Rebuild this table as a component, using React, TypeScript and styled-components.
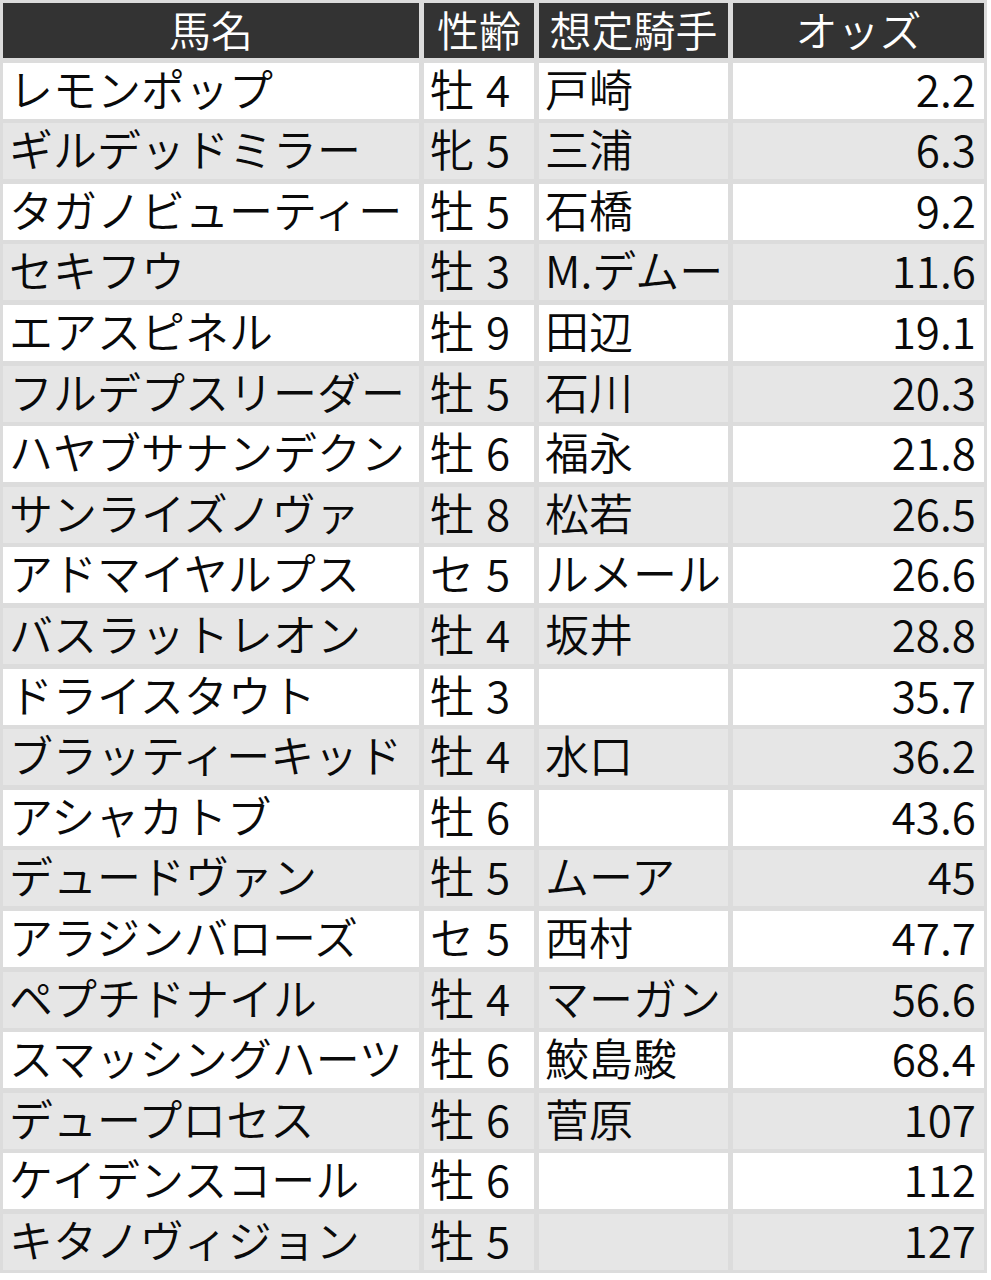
import React from "react";
import styled, { createGlobalStyle } from "styled-components";

const Global = createGlobalStyle`
  html, body { margin: 0; padding: 0; background: #ffffff; }
  body { font-family: "Noto Sans CJK JP", "Noto Sans", sans-serif; }
`;

const Grid = styled.div`
  display: grid;
  width: 987px;
  box-sizing: border-box;
  padding: 3px;
  background: #dcdcdc;
  grid-template-columns: 416px 110px 189px 251px;
  grid-template-rows: 55px;
  grid-auto-rows: 56px;
  column-gap: 5px;
  row-gap: 4.6px;
`;

const Row = styled.div`
  display: contents;
`;

const Head = styled.div`
  display: flex;
  align-items: center;
  justify-content: center;
  background: #333333;
  color: #ffffff;
  font-size: 42px;
  font-weight: 350;
  line-height: 1;
  padding-bottom: 4px;
  box-sizing: border-box;
  white-space: nowrap;
`;

const Cell = styled.div<{ $alt: boolean; $align?: "left" | "right" }>`
  display: flex;
  align-items: center;
  justify-content: ${(p) => (p.$align === "right" ? "flex-end" : "flex-start")};
  background: ${(p) => (p.$alt ? "#e6e6e6" : "#ffffff")};
  color: #0a0a0a;
  font-size: 44px;
  font-weight: 350;
  line-height: 1;
  box-sizing: border-box;
  padding: 0 ${(p) => (p.$align === "right" ? "8px" : "6px")} 6px;
  white-space: nowrap;
`;

const Sex = styled.span`
  margin-right: 12px;
`;

type Horse = [string, string, string, string, string];

const horses: Horse[] = [
  ["レモンポップ", "牡", "4", "戸崎", "2.2"],
  ["ギルデッドミラー", "牝", "5", "三浦", "6.3"],
  ["タガノビューティー", "牡", "5", "石橋", "9.2"],
  ["セキフウ", "牡", "3", "M.デムー", "11.6"],
  ["エアスピネル", "牡", "9", "田辺", "19.1"],
  ["フルデプスリーダー", "牡", "5", "石川", "20.3"],
  ["ハヤブサナンデクン", "牡", "6", "福永", "21.8"],
  ["サンライズノヴァ", "牡", "8", "松若", "26.5"],
  ["アドマイヤルプス", "セ", "5", "ルメール", "26.6"],
  ["バスラットレオン", "牡", "4", "坂井", "28.8"],
  ["ドライスタウト", "牡", "3", "", "35.7"],
  ["ブラッティーキッド", "牡", "4", "水口", "36.2"],
  ["アシャカトブ", "牡", "6", "", "43.6"],
  ["デュードヴァン", "牡", "5", "ムーア", "45"],
  ["アラジンバローズ", "セ", "5", "西村", "47.7"],
  ["ペプチドナイル", "牡", "4", "マーガン", "56.6"],
  ["スマッシングハーツ", "牡", "6", "鮫島駿", "68.4"],
  ["デュープロセス", "牡", "6", "菅原", "107"],
  ["ケイデンスコール", "牡", "6", "", "112"],
  ["キタノヴィジョン", "牡", "5", "", "127"],
];

export default function App() {
  return (
    <>
      <Global />
      <Grid>
        <Row>
          <Head>馬名</Head>
          <Head>性齢</Head>
          <Head>想定騎手</Head>
          <Head>オッズ</Head>
        </Row>
        {horses.map(([name, sex, age, jockey, odds], i) => {
          const alt = i % 2 === 1;
          return (
            <Row key={name}>
              <Cell $alt={alt}>{name}</Cell>
              <Cell $alt={alt}>
                <Sex>{sex}</Sex>
                {age}
              </Cell>
              <Cell $alt={alt}>{jockey}</Cell>
              <Cell $alt={alt} $align="right">
                {odds}
              </Cell>
            </Row>
          );
        })}
      </Grid>
    </>
  );
}
